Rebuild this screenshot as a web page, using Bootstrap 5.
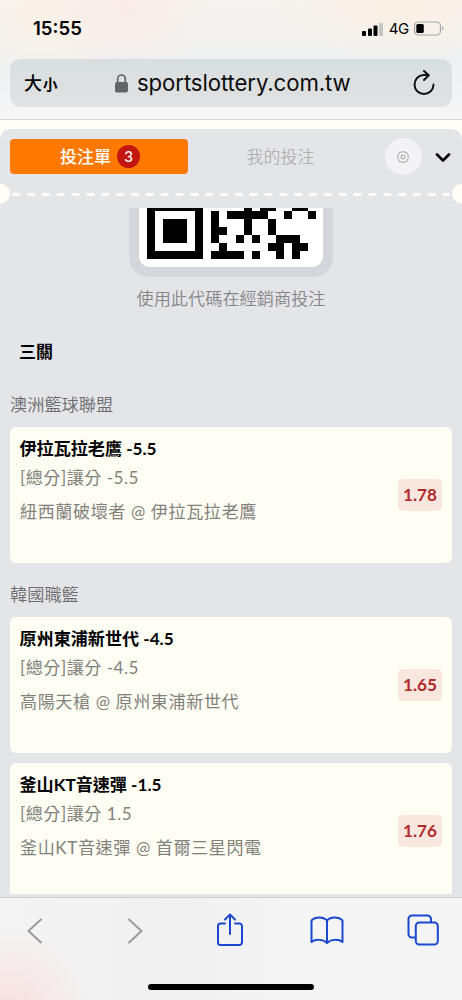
<!DOCTYPE html>
<html lang="zh-Hant">
<head>
<meta charset="utf-8">
<meta name="viewport" content="width=device-width, initial-scale=1">
<title>投注單</title>
<link href="https://cdn.jsdelivr.net/npm/bootstrap@5.3.0/dist/css/bootstrap.min.css" rel="stylesheet">
<style>
body{font-family:Lato,"Noto Sans CJK TC",sans-serif;font-size:17px;color:#000;background:#fffff5;height:1000px;overflow:hidden}
svg{display:block;flex:none}
.browser-top{height:120px;border-bottom:1px solid #d6d5d2;font-family:Inter,"Noto Sans CJK TC",sans-serif;
background:radial-gradient(circle at 125px 0,#f9ebe8 0,transparent 85px),radial-gradient(circle at 45px 15px,#faf2e8 0,transparent 80px),radial-gradient(ellipse 130px 50px at 400px 8px,#faf0e5 0,transparent 100%),linear-gradient(#f6f4ef 0,#f3f2ef 30%,#edf1f2 55%,#f2f4f5 80%,#f7f6f6 100%)}
.status{height:59px;padding:0 18px 0 33px}
.clock{font-size:18.6px;font-weight:600;line-height:57px}
.net{font-size:15px;font-weight:400;letter-spacing:-.3px;line-height:58px;margin:0 4px 0 6px}
.address{height:48px;margin:0 10px;border-radius:10px;padding:0 18px 0 14px;background:linear-gradient(#d8dfe1,#e0e1e2)}
.size-btn{width:91px;font-weight:500;font-size:18px;line-height:1;padding-top:2px}
.size-btn span{font-size:14.5px;margin-left:1px;font-weight:700}
.domain{font-size:22.2px;line-height:48px;letter-spacing:-.1px;color:#0c0c0c;margin-left:9px}
.sheet{height:777px;padding-top:9px}
.panel{background:#e4e5e8;border-radius:10px 10px 0 0;height:768px;overflow:hidden}
.tabs{height:65px;padding:10px 10px 0}
.tab-on{width:178px;height:35px;border-radius:4px;background:#ff7900;color:#fff;font-weight:500;line-height:35px;padding-left:2px}
.count{width:23px;height:23px;border-radius:50%;background:#c3160f;font-size:15px;line-height:23px;margin-left:6px}
.tab-off{width:185px;color:#b0b1b3;font-weight:350;line-height:35px}
.gear{width:37px;height:37px;border-radius:50%;background:#f3f3f5;margin:-1px 13px 0 12px;padding-right:1px}
.scroller{height:686px;overflow:hidden}
.qr-frame{width:204px;height:69px;background:#d5d5dc;border-radius:0 0 20px 20px;padding:0 10px 10px}
.qr-box{background:#fff;height:59px;border-radius:0 0 11px 11px;padding-left:8px}
.hint{height:44px;line-height:44px;font-weight:350;color:#858688;font-size:17.2px}
.combo{height:62px;line-height:62px;padding-left:19px;font-weight:700}
.league{height:44px;line-height:44px;padding-left:10px;color:#6b6c6f;font-weight:350;font-size:17.2px}
.bet{height:136px;margin:0 10px 10px;padding:10px;border-radius:6px;background:#fffef5}
.pick{font-weight:700;line-height:24px;font-size:17.1px;margin-left:-.5px}
.line{color:#82817b;font-weight:400;letter-spacing:.5px;font-size:17.1px;line-height:33px}
.line+.line{line-height:35px;letter-spacing:.58px}
.odds{width:44px;height:32px;border-radius:5px;background:#f8e6df;color:#b12b28;font-weight:700;font-size:17.2px;line-height:32px}
.browser-bottom{height:103px;border-top:1px solid #cfcfd1;background:radial-gradient(circle at 10px 110px,#f8e0e0 0,transparent 80px),linear-gradient(90deg,#f4f4f4,#f0f0f0 38%,#f4f4f4 60%,#f4f4f4)}
.actions{height:66px;padding-left:27px}
.forward{margin-left:84px}
.share{margin-left:73px;margin-top:-2px}
.book{margin-left:66px;margin-top:-2px}
.pages{margin-left:63px;margin-top:-2px}
.home{width:166px;height:6px;border-radius:3px;background:#000;margin:20px 0 0 148px}
</style>
<script src="https://cdn.jsdelivr.net/npm/bootstrap@5.3.0/dist/js/bootstrap.bundle.min.js"></script>
</head>
<body class="d-flex flex-column">
<header class="browser-top flex-shrink-0">
  <div class="status d-flex align-items-start justify-content-between">
    <div class="clock">15:55</div>
    <div class="d-flex align-items-center">
      <svg width="21" height="14" viewBox="0 0 21 14"><rect y="9" width="4" height="5" rx="1"/><rect x="6" y="6.5" width="4" height="7.5" rx="1"/><rect x="11.500" y="3.500" width="4" height="10.500" rx="1"/><rect x="17" y="1" width="4" height="13" rx="1" fill="#c4c4c4"/></svg>
      <span class="net">4G</span>
      <svg style="margin-top:-2px" width="31" height="15" viewBox="0 0 31 15"><rect x="1.500" y="1" width="26" height="13" rx="4" fill="none" stroke="#a6a6a6" stroke-width="1.200"/><rect x="3.300" y="3" width="7.500" height="9" rx="1.500"/><path d="M29 5.500Q32 7.500 29 9.500z" fill="#a6a6a6"/></svg>
    </div>
  </div>
  <div class="address d-flex align-items-center">
    <div class="size-btn">大<span>小</span></div>
    <svg width="13" height="19" viewBox="0 0 13 19"><rect y="8" width="13" height="10.500" rx="2" fill="#626467"/><path d="M2.700 8.500V5a3.800 4 0 0 1 7.600 0v3.500" fill="none" stroke="#626467" stroke-width="1.700"/></svg>
    <div class="domain">sportslottery.com.tw</div>
    <svg class="ms-auto" style="margin-right:-1px" width="22" height="26" viewBox="0 0 22 26" fill="none" stroke="#111" stroke-width="2" stroke-linecap="round" stroke-linejoin="round"><path d="M20.500 14.500A9.500 9.500 0 1 1 11 5h4M11 .9L15.800 5.300 11 10"/></svg>
  </div>
</header>

<main class="sheet flex-shrink-0">
  <div class="panel">
    <nav class="tabs d-flex">
      <div class="tab-on d-flex align-items-center justify-content-center">投注單<span class="count text-center">3</span></div>
      <div class="tab-off text-center">我的投注</div>
      <div class="gear d-flex align-items-center justify-content-center">
        <svg width="12" height="12" viewBox="0 0 12 12" fill="none" stroke="#98989a" stroke-width=".9"><path d="M4.500 1.200L6 .5 7.500 1.200 9.700 1.400 10.200 3.300 11.400 4.700 10.900 6 11.400 7.300 10.200 8.700 9.700 10.600 7.500 10.800 6 11.500 4.500 10.800 2.300 10.600 1.800 8.700 .6 7.300 1.100 6 .6 4.700 1.800 3.300 2.300 1.400z"/><circle cx="6" cy="6" r="2"/></svg>
      </div>
      <svg style="margin-top:14px" width="16" height="10" viewBox="0 0 16 10" fill="none" stroke="#000" stroke-width="2.600" stroke-linecap="round" stroke-linejoin="round"><path d="M2 1.500L8 7.500 14 1.500"/></svg>
    </nav>
    <svg style="margin-top:-11px" width="462" height="25" viewBox="0 0 462 25"><circle cx="0" cy="10.500" r="10" fill="#fffff5"/><circle cx="462" cy="10.500" r="10" fill="#fffff5"/><path d="M12.500 11.500H450" stroke="#fffff8" stroke-width="3" stroke-dasharray="7.500 7.340"/></svg>
    <div class="scroller">
      <div class="qr-frame mx-auto"><div class="qr-box">
        <svg width="169" height="51" viewBox="0 .65 21 6.35" preserveAspectRatio="none" shape-rendering="crispEdges"><path d="M0 0h7v7H0zM12 0h1v1h-1zM14 0h2v1h-2zM18 0h2v1h-2zM8 1h1v1H8zM10 1h5v1h-5zM17 1h1v1h-1zM20 1h1v1h-1zM8 2h1v1H8zM12 2h1v1h-1zM15 2h1v1h-1zM8 3h2v1H8zM12 3h1v1h-1zM15 3h1v1h-1zM8 4h1v1H8zM11 4h1v1h-1zM13 4h1v1h-1zM16 4h3v1h-3zM9 5h1v1H9zM15 5h2v1h-2zM18 5h2v1h-2zM8 6h4v1H8zM13 6h1v1h-1zM16 6h1v1h-1zM18 6h1v1h-1z"/><path d="M1 1h5v5H1z" fill="#fff"/><path d="M2 2h3v3H2z"/></svg>
      </div></div>
      <div class="hint text-center">使用此代碼在經銷商投注</div>
      <div class="combo">三關</div>
      <div class="league">澳洲籃球聯盟</div>
      <section class="bet d-flex align-items-center justify-content-between">
        <div class="align-self-start"><div class="pick">伊拉瓦拉老鷹 -5.5</div><div class="line">[總分]讓分 -5.5</div><div class="line">紐西蘭破壞者 @ 伊拉瓦拉老鷹</div></div>
        <div class="odds text-center">1.78</div>
      </section>
      <div class="league">韓國職籃</div>
      <section class="bet d-flex align-items-center justify-content-between">
        <div class="align-self-start"><div class="pick">原州東浦新世代 -4.5</div><div class="line">[總分]讓分 -4.5</div><div class="line">高陽天槍 @ 原州東浦新世代</div></div>
        <div class="odds text-center">1.65</div>
      </section>
      <section class="bet d-flex align-items-center justify-content-between">
        <div class="align-self-start"><div class="pick">釜山KT音速彈 -1.5</div><div class="line">[總分]讓分 1.5</div><div class="line">釜山KT音速彈 @ 首爾三星閃電</div></div>
        <div class="odds text-center">1.76</div>
      </section>
    </div>
  </div>
</main>

<footer class="browser-bottom flex-shrink-0">
  <div class="actions d-flex align-items-center">
    <svg width="16" height="26" viewBox="0 0 16 26" fill="none" stroke="#9a9a9c" stroke-width="2" stroke-linecap="round"><path d="M14 1.500L1.500 13 14 24.500"/></svg>
    <svg class="forward" width="16" height="26" viewBox="0 0 16 26" fill="none" stroke="#9a9a9c" stroke-width="2" stroke-linecap="round"><path d="M2 1.500L14.500 13 2 24.500"/></svg>
    <svg class="share" width="28" height="34" viewBox="0 0 28 34" fill="none" stroke="#1a49d0" stroke-width="2" stroke-linecap="round" stroke-linejoin="round"><path d="M9 10.500H4.500a2.500 2.500 0 0 0-2.500 2.500v16.500A2.500 2.500 0 0 0 4.500 32h19a2.500 2.500 0 0 0 2.500-2.500V13a2.500 2.500 0 0 0-2.500-2.500H19M14 21V1.500M9 6.500l5-5 5 5"/></svg>
    <svg class="book" width="34" height="28" viewBox="0 0 34 28" fill="none" stroke="#1a49d0" stroke-width="2" stroke-linejoin="round"><path d="M17 4.500C13.500.5 5 .5 1.500 4.500V26c3.500-3 12-3 15.500 1 3.500-4 12-4 15.500-1V4.500C29 .5 20.500.5 17 4.500zV27"/></svg>
    <svg class="pages" width="32" height="32" viewBox="0 0 32 32" fill="none" stroke="#1a49d0" stroke-width="2" stroke-linejoin="round"><rect x="8.800" y="8.500" width="22" height="22" rx="3.500"/><path d="M8.800 23.500H5A3.500 3.500 0 0 1 1.500 20V5A3.500 3.500 0 0 1 5 1.500h15.500A3.500 3.500 0 0 1 24 5v3.500"/></svg>
  </div>
  <div class="home"></div>
</footer>
</body>
</html>
